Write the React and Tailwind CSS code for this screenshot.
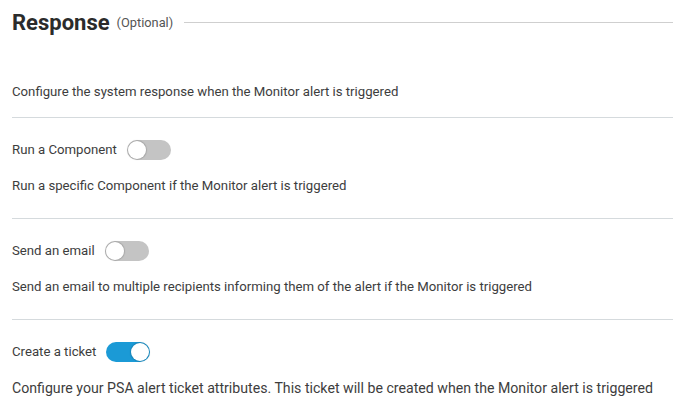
import { useState } from 'react'
import clsx from 'clsx'

const Toggle = ({ on, onClick }) => (
  <button
    onClick={onClick}
    className={clsx(
      'relative inline-flex items-center w-[44px] h-[20px] rounded-full transition-colors duration-200 outline-none',
      on ? 'bg-[#1b9ad6]' : 'bg-[#c4c4c4]',
    )}
  >
    <span
      className={clsx(
        'absolute top-[1px] h-[18px] w-[18px] rounded-full bg-white shadow-[0_0_1px_1px_rgba(0,0,0,0.15)] transition-all duration-200',
        on ? 'left-[25px]' : 'left-[1px]',
      )}
    />
  </button>
)

const ResponseRow = ({ label, description, on, onToggle, last, large }) => (
  <div className={clsx('pt-[22px] pb-[22px]', { 'border-b border-[#d5dadd]': !last })}>
    <div className="flex items-center h-[20px]">
      <span className="text-[13.2px] text-[#3d3d3d] mr-[10px]">{label}</span>
      <Toggle on={on} onClick={onToggle} />
    </div>
    <p
      className={clsx('text-[#3d3d3d] mt-[16px] leading-[20px]', {
        'text-[14.15px]': large,
        'text-[13.2px]': !large,
      })}
    >
      {description}
    </p>
  </div>
)

export default function App() {
  const [state, setState] = useState({ component: false, email: false, ticket: true })
  const flip = (key) => () => setState((s) => ({ ...s, [key]: !s[key] }))

  return (
    <div className="w-[673px] h-[405px] bg-white pl-[12px] overflow-hidden font-['Roboto',sans-serif]">
      <div className="flex items-center pt-[9px] h-[36px]">
        <h2 className="text-[22px] font-bold text-[#2b2b2b] leading-none">Response</h2>
        <span className="text-[12.8px] text-[#555] ml-[7px] mr-[11px]">(Optional)</span>
        <div className="flex-1 border-t border-[#cfcfcf]" />
      </div>

      <div className="border-b border-[#d5dadd] pt-[46px] pb-[15px]">
        <p className="text-[13.2px] text-[#3d3d3d] leading-[20px]">
          Configure the system response when the Monitor alert is triggered
        </p>
      </div>

      <ResponseRow
        label="Run a Component"
        description="Run a specific Component if the Monitor alert is triggered"
        on={state.component}
        onToggle={flip('component')}
      />
      <ResponseRow
        label="Send an email"
        description="Send an email to multiple recipients informing them of the alert if the Monitor is triggered"
        on={state.email}
        onToggle={flip('email')}
      />
      <ResponseRow
        label="Create a ticket"
        description="Configure your PSA alert ticket attributes. This ticket will be created when the Monitor alert is triggered"
        on={state.ticket}
        onToggle={flip('ticket')}
        last
        large
      />
    </div>
  )
}
